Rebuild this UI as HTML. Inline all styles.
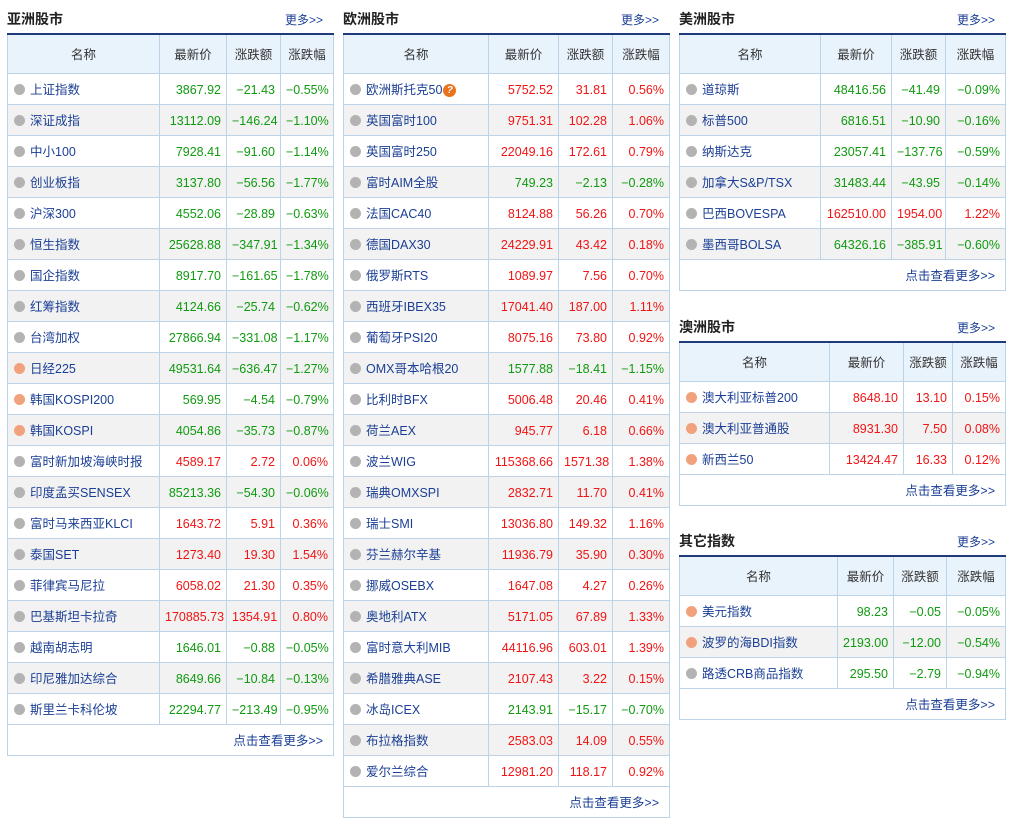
<!DOCTYPE html>
<html><head><meta charset="utf-8"><style>
body{margin:0;background:#fff;font-family:"Liberation Sans","Noto Sans CJK SC",sans-serif;font-size:12.5px;color:#333;width:1014px;height:828px;position:relative;overflow:hidden}
.sec{position:absolute;width:326px}
.hd{height:33px;position:relative}
.hd b{position:absolute;left:0;top:9px;font-size:14px;color:#222}
.hd a{position:absolute;right:10px;top:11px;font-size:12px;color:#1b3f95;text-decoration:none}
table{border-collapse:collapse;width:100%;table-layout:fixed;border-top:2px solid #1f3a7a}
td,th{border:1px solid #bcd3e8;height:31px;padding:3px 5px 0;box-sizing:border-box;text-align:right;white-space:nowrap;overflow:hidden}
th{background:#e9f3fc;font-weight:normal;text-align:center;height:39px;padding:0 5px;color:#333}
td.n{text-align:left;color:#1b3f95;padding:0 0 0 6px}
tr:nth-child(odd) td{background:#f2f2f2}
tr.f td{background:#fff!important;text-align:right;color:#1b3f95;padding:0 10px 0 0;height:31px}
.d{display:inline-block;width:11px;height:11px;border-radius:50%;background:#b3b3b3;vertical-align:-1px;margin-right:5px}
.o{background:#f1a27d}
.g{color:#109a10}.r{color:#f01414}
.q{display:inline-block;width:13px;height:13px;border-radius:50%;background:#e8731c;color:#fff;font-size:10px;text-align:center;line-height:13px;font-weight:bold;vertical-align:1px;margin-left:1px}
</style></head><body>

<div class="sec" style="left:7px;top:0">
<div class="hd"><b>亚洲股市</b><a>更多&gt;&gt;</a></div>
<table><colgroup><col style="width:152px"><col style="width:67px"><col style="width:54px"><col style="width:53px"></colgroup>
<tr><th>名称</th><th>最新价</th><th>涨跌额</th><th>涨跌幅</th></tr>
<tr><td class="n"><i class="d"></i>上证指数</td><td class="g">3867.92</td><td class="g">−21.43</td><td class="g">−0.55%</td></tr>
<tr><td class="n"><i class="d"></i>深证成指</td><td class="g">13112.09</td><td class="g">−146.24</td><td class="g">−1.10%</td></tr>
<tr><td class="n"><i class="d"></i>中小100</td><td class="g">7928.41</td><td class="g">−91.60</td><td class="g">−1.14%</td></tr>
<tr><td class="n"><i class="d"></i>创业板指</td><td class="g">3137.80</td><td class="g">−56.56</td><td class="g">−1.77%</td></tr>
<tr><td class="n"><i class="d"></i>沪深300</td><td class="g">4552.06</td><td class="g">−28.89</td><td class="g">−0.63%</td></tr>
<tr><td class="n"><i class="d"></i>恒生指数</td><td class="g">25628.88</td><td class="g">−347.91</td><td class="g">−1.34%</td></tr>
<tr><td class="n"><i class="d"></i>国企指数</td><td class="g">8917.70</td><td class="g">−161.65</td><td class="g">−1.78%</td></tr>
<tr><td class="n"><i class="d"></i>红筹指数</td><td class="g">4124.66</td><td class="g">−25.74</td><td class="g">−0.62%</td></tr>
<tr><td class="n"><i class="d"></i>台湾加权</td><td class="g">27866.94</td><td class="g">−331.08</td><td class="g">−1.17%</td></tr>
<tr><td class="n"><i class="d o"></i>日经225</td><td class="g">49531.64</td><td class="g">−636.47</td><td class="g">−1.27%</td></tr>
<tr><td class="n"><i class="d o"></i>韩国KOSPI200</td><td class="g">569.95</td><td class="g">−4.54</td><td class="g">−0.79%</td></tr>
<tr><td class="n"><i class="d o"></i>韩国KOSPI</td><td class="g">4054.86</td><td class="g">−35.73</td><td class="g">−0.87%</td></tr>
<tr><td class="n"><i class="d"></i>富时新加坡海峡时报</td><td class="r">4589.17</td><td class="r">2.72</td><td class="r">0.06%</td></tr>
<tr><td class="n"><i class="d"></i>印度孟买SENSEX</td><td class="g">85213.36</td><td class="g">−54.30</td><td class="g">−0.06%</td></tr>
<tr><td class="n"><i class="d"></i>富时马来西亚KLCI</td><td class="r">1643.72</td><td class="r">5.91</td><td class="r">0.36%</td></tr>
<tr><td class="n"><i class="d"></i>泰国SET</td><td class="r">1273.40</td><td class="r">19.30</td><td class="r">1.54%</td></tr>
<tr><td class="n"><i class="d"></i>菲律宾马尼拉</td><td class="r">6058.02</td><td class="r">21.30</td><td class="r">0.35%</td></tr>
<tr><td class="n"><i class="d"></i>巴基斯坦卡拉奇</td><td class="r">170885.73</td><td class="r">1354.91</td><td class="r">0.80%</td></tr>
<tr><td class="n"><i class="d"></i>越南胡志明</td><td class="g">1646.01</td><td class="g">−0.88</td><td class="g">−0.05%</td></tr>
<tr><td class="n"><i class="d"></i>印尼雅加达综合</td><td class="g">8649.66</td><td class="g">−10.84</td><td class="g">−0.13%</td></tr>
<tr><td class="n"><i class="d"></i>斯里兰卡科伦坡</td><td class="g">22294.77</td><td class="g">−213.49</td><td class="g">−0.95%</td></tr>
<tr class="f"><td colspan="4">点击查看更多&gt;&gt;</td></tr>
</table></div>

<div class="sec" style="left:343px;top:0">
<div class="hd"><b>欧洲股市</b><a>更多&gt;&gt;</a></div>
<table><colgroup><col style="width:145px"><col style="width:70px"><col style="width:54px"><col style="width:57px"></colgroup>
<tr><th>名称</th><th>最新价</th><th>涨跌额</th><th>涨跌幅</th></tr>
<tr><td class="n"><i class="d"></i>欧洲斯托克50<i class="q">?</i></td><td class="r">5752.52</td><td class="r">31.81</td><td class="r">0.56%</td></tr>
<tr><td class="n"><i class="d"></i>英国富时100</td><td class="r">9751.31</td><td class="r">102.28</td><td class="r">1.06%</td></tr>
<tr><td class="n"><i class="d"></i>英国富时250</td><td class="r">22049.16</td><td class="r">172.61</td><td class="r">0.79%</td></tr>
<tr><td class="n"><i class="d"></i>富时AIM全股</td><td class="g">749.23</td><td class="g">−2.13</td><td class="g">−0.28%</td></tr>
<tr><td class="n"><i class="d"></i>法国CAC40</td><td class="r">8124.88</td><td class="r">56.26</td><td class="r">0.70%</td></tr>
<tr><td class="n"><i class="d"></i>德国DAX30</td><td class="r">24229.91</td><td class="r">43.42</td><td class="r">0.18%</td></tr>
<tr><td class="n"><i class="d"></i>俄罗斯RTS</td><td class="r">1089.97</td><td class="r">7.56</td><td class="r">0.70%</td></tr>
<tr><td class="n"><i class="d"></i>西班牙IBEX35</td><td class="r">17041.40</td><td class="r">187.00</td><td class="r">1.11%</td></tr>
<tr><td class="n"><i class="d"></i>葡萄牙PSI20</td><td class="r">8075.16</td><td class="r">73.80</td><td class="r">0.92%</td></tr>
<tr><td class="n"><i class="d"></i>OMX哥本哈根20</td><td class="g">1577.88</td><td class="g">−18.41</td><td class="g">−1.15%</td></tr>
<tr><td class="n"><i class="d"></i>比利时BFX</td><td class="r">5006.48</td><td class="r">20.46</td><td class="r">0.41%</td></tr>
<tr><td class="n"><i class="d"></i>荷兰AEX</td><td class="r">945.77</td><td class="r">6.18</td><td class="r">0.66%</td></tr>
<tr><td class="n"><i class="d"></i>波兰WIG</td><td class="r">115368.66</td><td class="r">1571.38</td><td class="r">1.38%</td></tr>
<tr><td class="n"><i class="d"></i>瑞典OMXSPI</td><td class="r">2832.71</td><td class="r">11.70</td><td class="r">0.41%</td></tr>
<tr><td class="n"><i class="d"></i>瑞士SMI</td><td class="r">13036.80</td><td class="r">149.32</td><td class="r">1.16%</td></tr>
<tr><td class="n"><i class="d"></i>芬兰赫尔辛基</td><td class="r">11936.79</td><td class="r">35.90</td><td class="r">0.30%</td></tr>
<tr><td class="n"><i class="d"></i>挪威OSEBX</td><td class="r">1647.08</td><td class="r">4.27</td><td class="r">0.26%</td></tr>
<tr><td class="n"><i class="d"></i>奥地利ATX</td><td class="r">5171.05</td><td class="r">67.89</td><td class="r">1.33%</td></tr>
<tr><td class="n"><i class="d"></i>富时意大利MIB</td><td class="r">44116.96</td><td class="r">603.01</td><td class="r">1.39%</td></tr>
<tr><td class="n"><i class="d"></i>希腊雅典ASE</td><td class="r">2107.43</td><td class="r">3.22</td><td class="r">0.15%</td></tr>
<tr><td class="n"><i class="d"></i>冰岛ICEX</td><td class="g">2143.91</td><td class="g">−15.17</td><td class="g">−0.70%</td></tr>
<tr><td class="n"><i class="d"></i>布拉格指数</td><td class="r">2583.03</td><td class="r">14.09</td><td class="r">0.55%</td></tr>
<tr><td class="n"><i class="d"></i>爱尔兰综合</td><td class="r">12981.20</td><td class="r">118.17</td><td class="r">0.92%</td></tr>
<tr class="f"><td colspan="4">点击查看更多&gt;&gt;</td></tr>
</table></div>

<div class="sec" style="left:679px;top:0">
<div class="hd"><b>美洲股市</b><a>更多&gt;&gt;</a></div>
<table><colgroup><col style="width:141px"><col style="width:71px"><col style="width:54px"><col style="width:60px"></colgroup>
<tr><th>名称</th><th>最新价</th><th>涨跌额</th><th>涨跌幅</th></tr>
<tr><td class="n"><i class="d"></i>道琼斯</td><td class="g">48416.56</td><td class="g">−41.49</td><td class="g">−0.09%</td></tr>
<tr><td class="n"><i class="d"></i>标普500</td><td class="g">6816.51</td><td class="g">−10.90</td><td class="g">−0.16%</td></tr>
<tr><td class="n"><i class="d"></i>纳斯达克</td><td class="g">23057.41</td><td class="g">−137.76</td><td class="g">−0.59%</td></tr>
<tr><td class="n"><i class="d"></i>加拿大S&amp;P/TSX</td><td class="g">31483.44</td><td class="g">−43.95</td><td class="g">−0.14%</td></tr>
<tr><td class="n"><i class="d"></i>巴西BOVESPA</td><td class="r">162510.00</td><td class="r">1954.00</td><td class="r">1.22%</td></tr>
<tr><td class="n"><i class="d"></i>墨西哥BOLSA</td><td class="g">64326.16</td><td class="g">−385.91</td><td class="g">−0.60%</td></tr>
<tr class="f"><td colspan="4">点击查看更多&gt;&gt;</td></tr>
</table></div>

<div class="sec" style="left:679px;top:308px">
<div class="hd"><b>澳洲股市</b><a>更多&gt;&gt;</a></div>
<table><colgroup><col style="width:150px"><col style="width:74px"><col style="width:49px"><col style="width:53px"></colgroup>
<tr><th>名称</th><th>最新价</th><th>涨跌额</th><th>涨跌幅</th></tr>
<tr><td class="n"><i class="d o"></i>澳大利亚标普200</td><td class="r">8648.10</td><td class="r">13.10</td><td class="r">0.15%</td></tr>
<tr><td class="n"><i class="d o"></i>澳大利亚普通股</td><td class="r">8931.30</td><td class="r">7.50</td><td class="r">0.08%</td></tr>
<tr><td class="n"><i class="d o"></i>新西兰50</td><td class="r">13424.47</td><td class="r">16.33</td><td class="r">0.12%</td></tr>
<tr class="f"><td colspan="4">点击查看更多&gt;&gt;</td></tr>
</table></div>

<div class="sec" style="left:679px;top:522px">
<div class="hd"><b>其它指数</b><a>更多&gt;&gt;</a></div>
<table><colgroup><col style="width:158px"><col style="width:56px"><col style="width:53px"><col style="width:59px"></colgroup>
<tr><th>名称</th><th>最新价</th><th>涨跌额</th><th>涨跌幅</th></tr>
<tr><td class="n"><i class="d o"></i>美元指数</td><td class="g">98.23</td><td class="g">−0.05</td><td class="g">−0.05%</td></tr>
<tr><td class="n"><i class="d o"></i>波罗的海BDI指数</td><td class="g">2193.00</td><td class="g">−12.00</td><td class="g">−0.54%</td></tr>
<tr><td class="n"><i class="d"></i>路透CRB商品指数</td><td class="g">295.50</td><td class="g">−2.79</td><td class="g">−0.94%</td></tr>
<tr class="f"><td colspan="4">点击查看更多&gt;&gt;</td></tr>
</table></div>

</body></html>
